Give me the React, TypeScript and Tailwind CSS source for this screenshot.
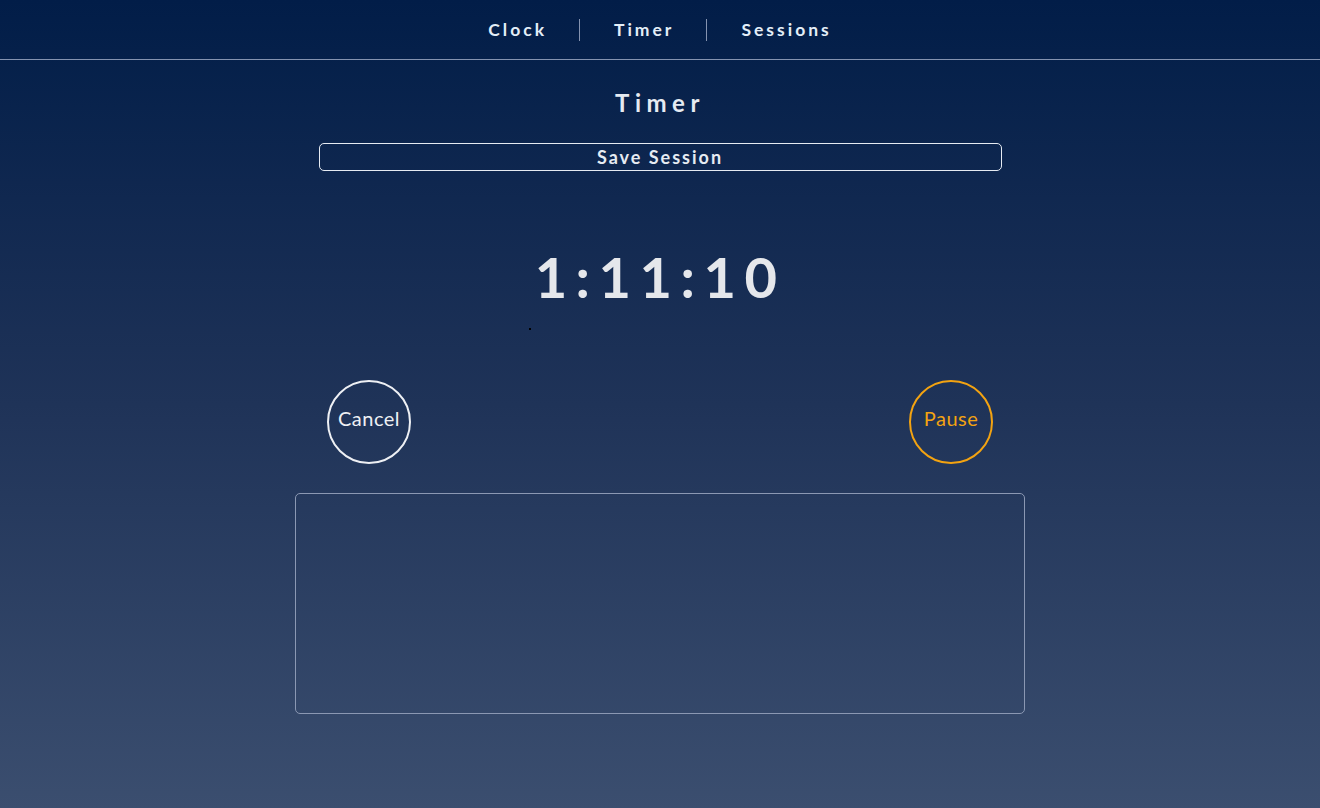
import React from "react";

export default function App() {
  return (
    <div
      className="min-h-[808px] w-full bg-gradient-to-b from-[#021d48] via-[#1f3358] to-[#3b4e6f] text-[#e6edf5]"
      style={{ fontFamily: "Lato, 'Open Sans', sans-serif" }}
    >
      <nav className="h-[60px] pt-[1px] border-b border-[#8593b0] flex items-center justify-center">
        <div className="flex items-center pr-[2px]">
          <a className="pl-[34px] pr-[32px] text-[17.5px] font-bold tracking-[3px] text-[#e3eef8]">Clock</a>
          <span className="h-[22px] w-px bg-[#8593b0]" />
          <a className="pl-[34px] pr-[32px] text-[17.5px] font-bold tracking-[3px] text-[#e3eef8]">Timer</a>
          <span className="h-[22px] w-px bg-[#8593b0]" />
          <a className="pl-[34px] pr-[32px] text-[17.5px] font-bold tracking-[3px] text-[#e3eef8]">Sessions</a>
        </div>
      </nav>
      <main className="flex flex-col items-center">
        <h1 className="mt-[28px] text-[24px] font-bold tracking-[5.5px] text-[#e6ebf2] leading-[30px]">Timer</h1>
        <button className="mt-[25px] w-[683px] h-[28px] border border-[#e6ebf2] rounded-[5px] text-[18px] font-bold tracking-[2px] text-[#e6ebf2] leading-none">
          Save Session
        </button>
        <div className="mt-[73px] text-[56px] font-bold tracking-[8.5px] text-[#e5e7eb] leading-[66px]">1:11:10</div>
        <div className="w-[660px] h-[1px] relative">
          <span className="absolute left-[199px] top-[18px] w-[2px] h-[2px] bg-black" />
        </div>
        <div className="mt-[69px] w-[666px] flex justify-between">
          <button className="w-[84px] h-[84px] pb-[9px] rounded-full border-2 border-[#eef0f4] text-[20px] tracking-[0.5px] text-[#eef0f4]">
            Cancel
          </button>
          <button className="w-[84px] h-[84px] pb-[9px] rounded-full border-2 border-[#f3a311] text-[20px] tracking-[0.5px] text-[#f3a311]">
            Pause
          </button>
        </div>
        <div className="mt-[29px] w-[730px] h-[221px] border border-[#8b98b3] rounded-[5px]" />
      </main>
    </div>
  );
}
